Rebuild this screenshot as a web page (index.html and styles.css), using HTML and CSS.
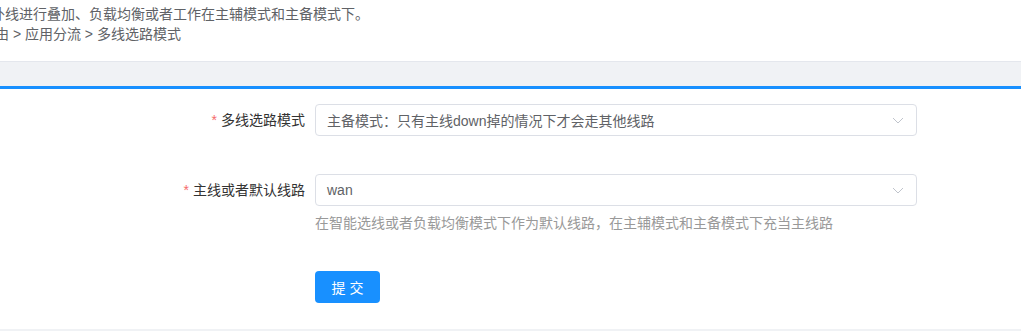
FILE: index.html
```html
<!DOCTYPE html>
<html lang="zh-CN">
<head>
    <meta charset="UTF-8">
    <meta name="viewport" content="width=device-width, initial-scale=1.0">
    <title>多线选路模式</title>
    <link rel="stylesheet" href="styles.css">
</head>
<body>
    <div class="page-head">
        <p class="desc">外线进行叠加、负载均衡或者工作在主辅模式和主备模式下。</p>
        <p class="crumbs">由 &gt; 应用分流 &gt; 多线选路模式</p>
    </div>

    <div class="tab-bar"></div>

    <form class="panel" onsubmit="return false">
        <div class="form-item">
            <label class="form-label"><span class="req">*</span>多线选路模式</label>
            <div class="form-field">
                <div class="select">
                    <span class="select-value">主备模式：只有主线down掉的情况下才会走其他线路</span>
                    <svg class="select-arrow" width="12" height="12" viewBox="0 0 12 12">
                        <path d="M1 4 L6 9 L11 4" fill="none" stroke="#c0c4cc" stroke-width="1"/>
                    </svg>
                </div>
            </div>
        </div>

        <div class="form-item">
            <label class="form-label"><span class="req">*</span>主线或者默认线路</label>
            <div class="form-field">
                <div class="select">
                    <span class="select-value">wan</span>
                    <svg class="select-arrow" width="12" height="12" viewBox="0 0 12 12">
                        <path d="M1 4 L6 9 L11 4" fill="none" stroke="#c0c4cc" stroke-width="1"/>
                    </svg>
                </div>
                <div class="form-help">在智能选线或者负载均衡模式下作为默认线路，在主辅模式和主备模式下充当主线路</div>
            </div>
        </div>

        <div class="form-item actions">
            <div class="form-label"></div>
            <div class="form-field">
                <button type="submit" class="btn-primary">提 交</button>
            </div>
        </div>
    </form>

    <div class="foot-bar"></div>
</body>
</html>
```

FILE: styles.css
```css
body {
    margin: 0;
    font-family: "Liberation Sans", "Noto Sans CJK SC", sans-serif;
    font-size: 14px;
    color: #606266;
    background: #fff;
    overflow: hidden;
}
.page-head {
    height: 61px;
    padding-top: 4px;
    box-sizing: border-box;
}
.page-head p {
    margin: 0;
    line-height: 20px;
    white-space: nowrap;
}
.desc {
    margin-left: -9px !important;
}
.crumbs {
    margin-left: -5px !important;
}
.tab-bar {
    height: 24px;
    background: #f0f2f5;
    border-top: 1px solid #e4e7ed;
    border-bottom: 3px solid #1890ff;
}
.panel {
    padding: 15px 0 26px;
}
.form-item {
    display: flex;
    align-items: flex-start;
    margin-bottom: 38px;
}
.form-item.actions {
    margin-bottom: 0;
}
.form-label {
    width: 305px;
    flex: none;
    padding-right: 10px;
    text-align: right;
    line-height: 32px;
    color: #333;
}
.req {
    color: #f56c6c;
    margin-right: 4px;
}
.form-field {
    width: 602px;
}
.select {
    height: 32px;
    box-sizing: border-box;
    border: 1px solid #dcdfe6;
    border-radius: 4px;
    display: flex;
    align-items: center;
    justify-content: space-between;
    padding: 0 12px 0 11px;
}
.select-value {
    color: #606266;
}
.select-arrow {
    flex: none;
}
.form-help {
    margin-top: 7px;
    line-height: 20px;
    font-size: 14px;
    color: #999;
}
.form-item:nth-child(2) {
    margin-bottom: 38px;
}
.btn-primary {
    width: 65px;
    height: 32px;
    border: none;
    border-radius: 4px;
    background: #1890ff;
    color: #fff;
    font-family: inherit;
    font-size: 14px;
    cursor: pointer;
}
.foot-bar {
    height: 10px;
    background: #f0f2f5;
}
```
